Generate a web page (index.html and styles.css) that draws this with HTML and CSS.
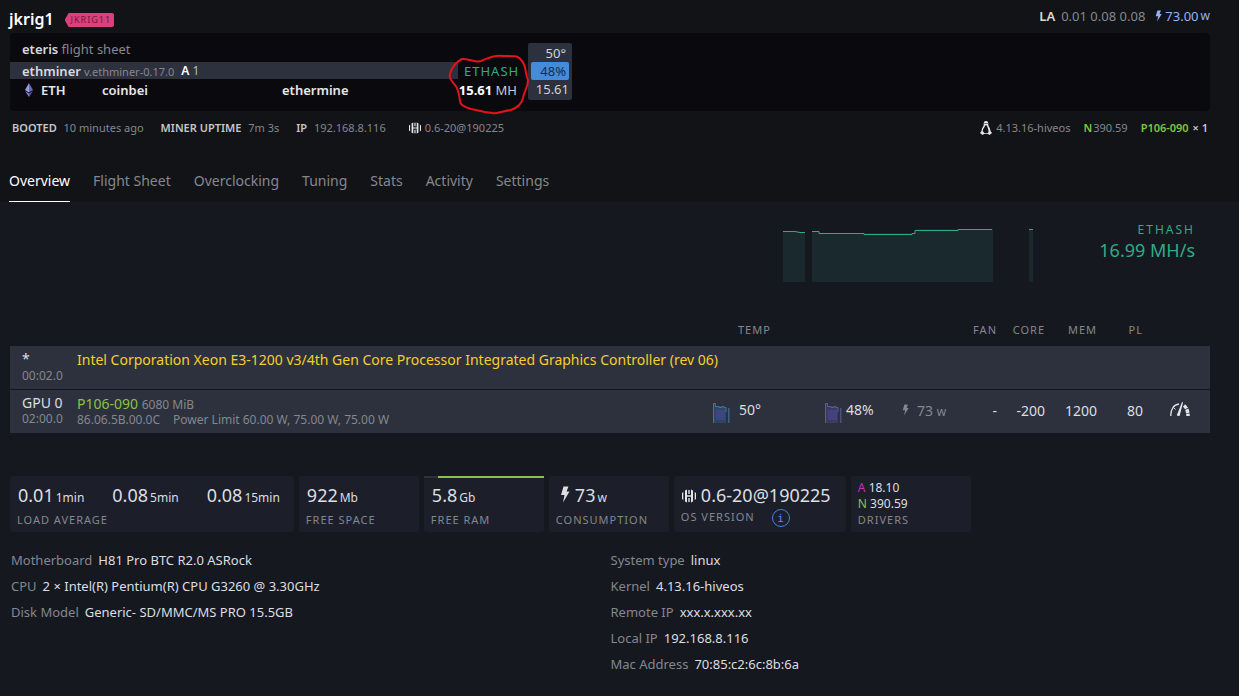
FILE: index.html
```html
<!DOCTYPE html>
<html lang="en">
<head>
<meta charset="utf-8">
<title>jkrig1 - Overview</title>
<link rel="stylesheet" href="styles.css">
</head>
<body>
<svg class="defs" width="0" height="0" aria-hidden="true">
  <symbol id="bolt" viewBox="0 0 10 16"><path d="M3.5 0h5L6.500 5H9.500L3 16l1.500-7.500H1z" fill="currentColor"/></symbol>
  <symbol id="hive" viewBox="0 0 14 14"><path fill="currentColor" d="M0 4l1.300-1v8L0 10zM3 1.500L5 .5v13l-2-1zM6.300 1h1.400v4H6.300zM6.300 9h1.400v4H6.300zM5 6.300h4v1.400H5zM9 .5l2 1v11l-2 1zM12.700 3L14 4v6l-1.300 1z"/></symbol>
  <symbol id="bars" viewBox="0 0 18 22">
    <path fill="currentColor" fill-opacity=".25" d="M1 2h2v3h9v1h2v16H1z"/>
    <path fill="#46479a" fill-opacity=".6" d="M4 9h9v10H4z"/>
    <path fill="none" stroke="currentColor" stroke-opacity=".8" d="M1.500 22V2.500h2v3H7v1h3v-1h2v1h2V11"/>
    <path fill="currentColor" fill-opacity=".6" d="M16 7h1.500v15H16z"/>
  </symbol>
</svg>
<header class="top">
  <div class="title-row">
    <h1>jkrig1</h1>
    <span class="tag">JKRIG11</span>
    <div class="load"><b>LA</b><span>0.01 0.08 0.08</span><span class="power"><svg class="bolt"><use href="#bolt"/></svg>73.00<small>w</small></span></div>
  </div>
  <section class="panel">
    <div class="sheet">
      <div class="line"><b>eteris</b>&nbsp;flight sheet</div>
      <div class="line miner">
        <div class="miner-bar"><b>ethminer</b><small>v.ethminer-0.17.0</small><span class="amd"><b>A</b> 1</span></div>
        <span class="algo">ETHASH</span>
      </div>
      <div class="line coin">
        <span class="eth"><svg width="8" height="14" viewBox="0 0 8 14"><path fill="#9a9be0" d="M4 0L0 7l4 2.500z"/><path fill="#6768b8" d="M4 0l4 7-4 2.500z"/><path fill="#8384cf" d="M0 8l4 2.500V14z"/><path fill="#55569f" d="M8 8l-4 2.500V14z"/></svg><b>ETH</b></span>
        <b class="wallet">coinbei</b><b class="pool">ethermine</b>
        <span class="rate"><b>15.61</b> MH</span>
      </div>
      <svg class="mark" width="84" height="62" viewBox="0 0 84 62"><path d="M14 5C20 4 25 9 33 7C41 4 45 1 55 2C67 2 70 1 74 7C79 13 77 21 80 26C80 34 76 37 75 44C74 49 71 53 63 56C54 57 49 60 44 59C33 58 29 56 23 55C16 53 12 51 12 47C11 39 10 34 7 31C3 26 1 24 2 20C3 14 9 7 14 5Z"/></svg>
    </div>
    <div class="gpu"><span>50°</span><span class="fan">48%</span><span>15.61</span></div>
  </section>
  <div class="meta">
    <span><b>BOOTED</b> 10 minutes ago</span>
    <span><b>MINER UPTIME</b> 7m 3s</span>
    <span><b>IP</b> 192.168.8.116</span>
    <span class="os"><svg class="hive"><use href="#hive"/></svg>0.6-20@190225</span>
    <span class="kernel"><svg width="12" height="14" viewBox="0 0 12 14"><path fill="#e4e5e8" d="M6 0C8 0 8.400 1.500 8.300 4c.2 1.500 2.200 3 2.200 6l1.500 2-2.500 2-1.500-1H4l-1.500 1L0 12l1.500-2C1.500 7 3.600 5.500 3.700 4 3.600 1.500 4 0 6 0z"/><path fill="#121317" d="M5 4.500h2C7 6 8.800 8 8.500 11l-1 1.200h-3L2.700 10C3 7.500 5 6 5 4.500zM4.600 2h1v1h-1zM6.500 2h1v1h-1z"/></svg>4.13.16-hiveos</span>
    <span class="nv"><b>N</b>390.59</span>
    <span class="model"><b>P106-090</b> <b>× 1</b></span>
  </div>
  <nav class="tabs">
    <a class="active" href="#overview">Overview</a><a href="#flight">Flight Sheet</a><a href="#oc">Overclocking</a><a href="#tuning">Tuning</a><a href="#stats">Stats</a><a href="#activity">Activity</a><a href="#settings">Settings</a>
  </nav>
</header>
<main>
  <section class="hash">
    <svg width="250" height="54" viewBox="0 0 250 54">
      <path fill="#1a292d" d="M0 3h13l9 2v49H0zM29 3h7l2 2h94l2-4h76v53H29zM246 1h4v53h-4z"/>
      <path fill="none" stroke="#2fab87" d="M0 3.500h12l5 1h5M29 3.500h7v2h3l2 0h40v1h48v-1h3v-3h43v-1h34M246 1.500h4"/>
    </svg>
    <div class="hash-text"><span>ETHASH</span><strong>16.99 MH/s</strong></div>
  </section>
  <table class="cards">
    <colgroup><col class="c-id"><col><col class="c-temp"><col class="c-load"><col class="c-power"><col class="c-fan"><col class="c-core"><col class="c-mem"><col class="c-pl"><col class="c-act"></colgroup>
    <thead><tr><th></th><th></th><th class="temp-head">TEMP</th><th></th><th></th><th>FAN</th><th>CORE</th><th>MEM</th><th>PL</th><th></th></tr></thead>
    <tbody>
      <tr><td class="id"><span class="star">*</span><small>00:02.0</small></td><td colspan="9" class="intel">Intel Corporation Xeon E3-1200 v3/4th Gen Core Processor Integrated Graphics Controller (rev 06)</td></tr>
      <tr class="gpu-row"><td class="id">GPU 0<small>02:00.0</small></td>
        <td class="name"><span class="green">P106-090</span> <span class="mem">6080 MiB</span><small>86.06.5B.00.0C<span class="limit">Power Limit 60.00 W, 75.00 W, 75.00 W</span></small></td>
        <td><span class="stat blue"><svg class="bars"><use href="#bars"/></svg>50°</span></td>
        <td><span class="stat violet"><svg class="bars"><use href="#bars"/></svg>48%</span></td>
        <td class="watt"><svg class="bolt"><use href="#bolt"/></svg>73 <small>w</small></td>
        <td class="num">-</td><td class="num">-200</td><td class="num">1200</td><td class="num">80</td>
        <td class="act"><button aria-label="Overclocking"><svg width="20" height="14" viewBox="0 0 20 14"><path fill="none" stroke="#e3e5e9" stroke-width="1.300" d="M.8 14C.5 7 4 2.500 9 2"/><path fill="none" stroke="#e3e5e9" stroke-width="1" d="M4 6l1.500 1.500"/><path fill="none" stroke="#e3e5e9" stroke-width="3.500" stroke-dasharray="4 .7" d="M14 3.500C16.500 5.500 18 9 18 14"/><path fill="#e3e5e9" d="M12 0l1 .5L10 12.500a1.500 1.500 0 1 1-2.500-1z"/></svg></button></td></tr>
    </tbody>
  </table>
  <section class="tiles">
    <div class="tile"><p class="big loads"><span>0.01<small>1min</small></span><span>0.08<small>5min</small></span><span>0.08<small>15min</small></span></p><p class="cap">LOAD AVERAGE</p></div>
    <div class="tile"><p class="big">922<small>Mb</small></p><p class="cap">FREE SPACE</p></div>
    <div class="tile ram"><p class="big">5.8<small>Gb</small></p><p class="cap">FREE RAM</p></div>
    <div class="tile"><p class="big"><svg class="bolt"><use href="#bolt"/></svg>73<small>w</small></p><p class="cap">CONSUMPTION</p></div>
    <div class="tile version"><p class="big"><svg class="hive"><use href="#hive"/></svg>0.6-20@190225</p><p class="cap">OS VERSION<button class="info" aria-label="Version info">i</button></p></div>
    <div class="tile drivers"><p><span class="a">A</span> 18.10</p><p><span class="green">N</span> 390.59</p><p class="cap">DRIVERS</p></div>
  </section>
  <section class="details">
    <dl><div><dt>Motherboard</dt><dd>H81 Pro BTC R2.0 ASRock</dd></div><div><dt>CPU</dt><dd>2 × Intel(R) Pentium(R) CPU G3260 @ 3.30GHz</dd></div><div><dt>Disk Model</dt><dd>Generic- SD/MMC/MS PRO 15.5GB</dd></div></dl>
    <dl><div><dt>System type</dt><dd>linux</dd></div><div><dt>Kernel</dt><dd>4.13.16-hiveos</dd></div><div><dt>Remote IP</dt><dd>xxx.x.xxx.xx</dd></div><div><dt>Local IP</dt><dd>192.168.8.116</dd></div><div><dt>Mac Address</dt><dd>70:85:c2:6c:8b:6a</dd></div></dl>
  </section>
</main>
</body>
</html>
```
FILE: styles.css
```css
* { box-sizing: border-box; }
body { margin: 0; background: #161820; color: #dcdee2; font: 13px/18px "Noto Sans", "Open Sans", sans-serif; }
b { font-weight: 600; }
h1, p, dl, dd { margin: 0; }
svg { flex: none; }
button { padding: 0; border: 0; background: none; color: inherit; font: inherit; }
.defs { position: absolute; }
.bolt { width: 7px; height: 12px; }
.hive { width: 12px; height: 12px; color: #e4e5e8; }
.green { color: #8ac249; }

.top { padding: 0 29px 0 10px; background: #121317; }
.title-row { display: flex; align-items: center; height: 33px; padding-top: 5px; }
h1 { margin-left: -1px; font-size: 16px; line-height: 22px; font-weight: 600; color: #fff; }
.tag { margin: 2px 0 0 11px; padding: 0 3px 0 6px; background: #dd3f7c; color: #6b1d3d; font-size: 9px; line-height: 14px; letter-spacing: 1px; border-radius: 2px; clip-path: polygon(0 50%, 4px 0, 100% 0, 100% 100%, 4px 100%); }
.load { display: flex; align-items: center; align-self: flex-start; gap: 6px; margin-left: auto; padding-top: 2px; color: #85878e; }
.load b { color: #dedccf; }
.power { display: flex; align-items: center; gap: 3px; margin-left: 4px; color: #8fb4f6; }
.power small { font-size: 12px; margin-left: -1px; }

.panel { display: flex; align-items: flex-start; min-height: 78px; padding: 6px 0; background: #0a0a0e; border-radius: 4px; }
.sheet { position: relative; flex: 0 0 518px; }
.line { display: flex; align-items: center; height: 20px; padding-left: 12px; color: #85878e; }
.line b { color: #d8dade; }
.miner { height: 23px; padding-left: 0; }
.miner-bar { display: flex; align-items: center; width: 448px; height: 17px; padding-left: 12px; background: #2c313d; }
.miner-bar small { margin: 2px 7px 0 3px; font-size: 11px; }
.miner-bar .amd { color: #b9bbc2; font-size: 12px; }
.miner-bar .amd b { color: #fff; }
.algo { margin-left: 6px; color: #2fab87; letter-spacing: 1px; }
.coin { height: 16px; }
.coin b { color: #e6e7ea; }
.eth { display: flex; align-items: center; gap: 8px; width: 80px; padding-left: 3px; }
.wallet { width: 180px; }
.rate { margin: 0 11px 0 auto; color: #c9cbd0; }
.coin .rate b { color: #fff; font-weight: 700; }
.mark { position: absolute; left: 438px; top: 15px; fill: none; stroke: #e3121c; stroke-width: 2; z-index: 1; }
.gpu { display: flex; flex-direction: column; width: 44px; margin-top: 4px; padding: 1px 3px 2px; background: #2c313d; border-radius: 2px; text-align: right; line-height: 18px; }
.gpu span { padding-right: 3px; color: #d2d4d9; }
.gpu .fan { background: #468bd8; color: #122d4d; border-radius: 2px; }
.gpu span:last-child { padding-right: 0; }

.meta { display: flex; align-items: center; height: 33px; padding: 0 2px; gap: 17px; color: #85878e; font-size: 11px; }
.meta b { margin-right: 4px; color: #c5c7cc; }
.os, .kernel, .nv { display: flex; align-items: center; gap: 4px; }
.os { margin-left: 6px; }
.kernel { margin-left: auto; }
.nv { gap: 0; margin-left: -4px; }
.nv b, .model b:first-child { color: #7fc641; }
.model { margin-left: -4px; }
.meta .nv b, .meta .model b { margin-right: 1px; }
.meta .model b:last-child { margin-right: 0; }

.tabs { display: flex; gap: 23px; height: 58px; margin-left: -1px; padding-top: 16px; font-size: 14px; line-height: 41px; }
.tabs a { height: 42px; color: #85878e; text-decoration: none; }
.tabs .active { color: #fff; border-bottom: 1px solid #fff; }

main { padding: 0 29px 0 10px; }
.hash { display: flex; justify-content: flex-end; padding: 26px 15px 0 0; }
.hash-text { display: flex; flex-direction: column; width: 162px; margin-top: -7px; text-align: right; color: #2fab87; }
.hash-text span { font-size: 12px; line-height: 17px; letter-spacing: 2px; }
.hash-text strong { font-size: 18px; line-height: 24px; font-weight: 400; }

.cards { width: 100%; margin-top: 38px; border-collapse: collapse; table-layout: fixed; font-size: 14px; }
.c-id { width: 67px; } .c-temp { width: 112px; } .c-load { width: 78px; } .c-power { width: 58px; }
.c-fan { width: 37px; } .c-core { width: 48px; } .c-mem { width: 52px; } .c-pl { width: 46px; } .c-act { width: 67px; }
.cards th { height: 26px; padding: 0 0 6px; font-size: 11px; line-height: 18px; font-weight: 400; letter-spacing: 1px; text-align: right; color: #85878e; }
.cards .temp-head { padding-left: 26px; text-align: left; }
.cards td { height: 43px; padding: 0; white-space: nowrap; }
.cards .gpu-row td { height: 44px; }
.cards tbody tr { background: #2c313d; border-top: 1px solid #14161c; }
.cards tbody tr:first-child { border-top: 0; }
.cards small { font-size: 12px; color: #85878e; }
.cards .id { padding-left: 12px; line-height: 16px; }
.id small { display: block; }
.star { display: block; height: 18px; padding-top: 1px; }
.cards .intel { padding-top: 5px; vertical-align: top; color: #f6cf29; }
.name { line-height: 15px; }
.name small { display: block; }
.mem { font-size: 12px; color: #85878e; }
.limit { margin-left: 13px; }
.stat { display: flex; align-items: center; gap: 4px; margin-top: -2px; }
.bars { width: 18px; height: 22px; margin-top: 4px; }
.blue { gap: 9px; }
.blue .bars { color: #4082bd; }
.violet .bars { color: #6860ae; }
.cards .watt { color: #85878e; }
.watt .bolt { margin-right: 8px; }
.cards .num { text-align: right; }
.cards .act { padding-left: 27px; }
.act button { display: block; }

.tiles { display: flex; flex-wrap: wrap; gap: 5px; margin-top: 43px; }
.tile { min-width: 120px; height: 56px; padding: 9px 7px 0; background: #1c1f2a; border-radius: 3px; }
.big { display: flex; align-items: baseline; height: 21px; font-size: 18px; line-height: 21px; padding-left: 1px; }
.big small { margin-left: 2px; font-size: 12px; }
.loads { gap: 28px; padding-right: 7px; }
.cap { margin-top: 5px; font-size: 11px; line-height: 18px; letter-spacing: 1px; color: #85878e; }
.big .bolt { width: 10px; height: 17px; margin: 1px 5px 0 3px; align-self: flex-start; }
.ram { padding-top: 7px; border-top: 2px solid; border-image: linear-gradient(to right, #2c313d 16px, #8ac249 16px) 2; }
.version { min-width: 172px; }
.version .hive { width: 14px; height: 14px; margin-right: 5px; align-self: center; }
.version .cap { display: flex; margin-top: 2px; }
.info { width: 18px; height: 18px; margin: 1px 0 0 17px; border: 1px solid #4c7de0; border-radius: 50%; color: #5c8af0; font: 11px/15px "DejaVu Sans Mono", monospace; }
.drivers { padding-top: 4px; font-size: 12px; line-height: 16px; }
.drivers .cap { margin-top: 0; line-height: 16px; }
.a { color: #c530b5; }

.details { display: grid; grid-template-columns: 1fr 1fr; padding: 15px 0 0 1px; line-height: 26px; }
.details div { display: flex; gap: 6px; }
.details dt { color: #85878e; }
```
